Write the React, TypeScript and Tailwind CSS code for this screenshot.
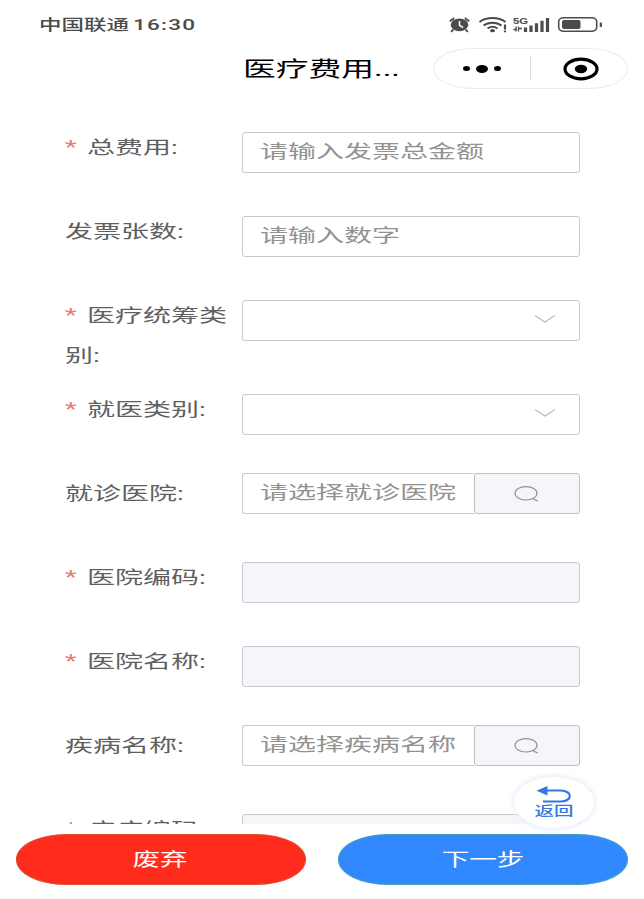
import React from "react";

type Field = {
  label: string[];
  required?: boolean;
  type: "input" | "select" | "search" | "disabled";
  placeholder?: string;
};

const fields: Field[] = [
  { label: ["总费用:"], required: true, type: "input", placeholder: "请输入发票总金额" },
  { label: ["发票张数:"], type: "input", placeholder: "请输入数字" },
  { label: ["医疗统筹类", "别:"], required: true, type: "select" },
  { label: ["就医类别:"], required: true, type: "select" },
  { label: ["就诊医院:"], type: "search", placeholder: "请选择就诊医院" },
  { label: ["医院编码:"], required: true, type: "disabled" },
  { label: ["医院名称:"], required: true, type: "disabled" },
  { label: ["疾病名称:"], type: "search", placeholder: "请选择疾病名称" },
  { label: ["疾病编码:"], required: true, type: "disabled" },
];

const StatusIcons = () => {
  return (
    <svg className="h-5 w-[160px]" viewBox="0 0 160 20" fill="none">
      {/* alarm */}
      <g transform="translate(5 2)">
        <ellipse cx="10.5" cy="7.8" rx="8.8" ry="6.4" fill="#4b4b4b" />
        <path d="M.8 4.2 5.200 1M20.200 4.200 15.800 1M4.500 12.500 2 14.800M16.500 12.500 19 14.800" stroke="#4b4b4b" strokeWidth="1.8" />
        <path d="M10.500 4v4.300l3.600 2.200" stroke="#fff" strokeWidth="1.5" />
      </g>
      {/* wifi */}
      <g stroke="#4b4b4b" strokeWidth="2">
        <path d="M35.500 7c7-5.200 19-5.200 26 0" />
        <path d="M39.500 10.500c5-3.800 13-3.800 18 0" />
        <path d="M43.500 13.500c3-2 7-2 10 0" />
      </g>
      <ellipse cx="48.500" cy="15.700" rx="2.500" ry="1.600" fill="#4b4b4b" />
      <path d="M61 9.500v5M61 15.500v1.800" stroke="#4b4b4b" strokeWidth="2.200" />
      {/* signal */}
      <text x="0" y="0" transform="translate(69 9.2) scale(1.2 1)" fontSize="9.5" fontWeight="700" fill="#4b4b4b" fontFamily="Liberation Sans, sans-serif">5G</text>
      <path d="M69.500 14.500h3.500M72 11.500v5M74.500 11.500v5M74.500 13.500h3.500" stroke="#4b4b4b" strokeWidth="1.300" />
      <path d="M81.500 12.500v4.500M87 10.500v6.500M92.500 8.200V17M98 5.800V17M103.500 3v14" stroke="#4b4b4b" strokeWidth="3.200" />
      {/* battery */}
      <rect x="114.700" y="2.800" width="38" height="13.400" rx="5" ry="3.600" stroke="#4b4b4b" strokeWidth="1.600" />
      <rect x="118" y="5" width="18.500" height="9" rx="2" fill="#4b4b4b" />
      <path d="M156.800 7.500v4.500" stroke="#4b4b4b" strokeWidth="2.200" />
    </svg>
  );
};

const SearchIcon = () => {
  return (
    <svg className="h-4 w-6" viewBox="0 0 24 16" fill="none" stroke="#8f9196" strokeWidth="1.2">
      <ellipse cx="12" cy="7.300" rx="11" ry="6.700" />
      <path d="M18.500 12.200c1.500 1.400 3 2 5.200 2.600" />
    </svg>
  );
};

const ArrowDown = () => {
  return (
    <svg className="mb-[3px] h-2 w-[22px]" viewBox="0 0 22 8" fill="none" stroke="#b9bbbf" strokeWidth="1.2">
      <path d="M1 .6 11 7 21 .6" />
    </svg>
  );
};

const Placeholder = ({ text }: { text?: string }) => {
  return (
    <span className="inline-block origin-left scale-x-[1.556] whitespace-nowrap text-[18px] leading-[38px] text-[#929292]">
      {text}
    </span>
  );
};

const Control = ({ field }: { field: Field }) => {
  if (field.type === "search") {
    return (
      <div className="flex h-[41px] w-[338px]">
        <div className="w-[232px] overflow-hidden rounded-l-[3px] border border-r-0 border-[#c9cacd] pl-[17px]">
          <Placeholder text={field.placeholder} />
        </div>
        <div className="flex flex-1 items-center justify-center rounded-[3px] border border-[#bfc0c4] bg-[#f5f6fa] pr-0.5">
          <SearchIcon />
        </div>
      </div>
    );
  }
  if (field.type === "disabled") {
    return <div className="mt-[5px] h-[41px] w-[338px] rounded-[3px] border border-[#c9cacf] bg-[#f5f6fa]"></div>;
  }
  return (
    <div className="mt-[5px] flex h-[41px] w-[338px] items-center justify-between rounded-[3px] border border-[#c9c9cb] pb-px pl-[17px] pr-[23px]">
      <Placeholder text={field.placeholder} />
      {field.type === "select" && <ArrowDown />}
    </div>
  );
};

const FormItem = ({ field }: { field: Field }) => {
  return (
    <div className={field.label.length > 1 ? "flex h-[94px] shrink-0" : "flex h-[84px] shrink-0"}>
      <div className="w-[177px] shrink-0 pt-px text-[18px] leading-10 text-[#5f5f61]">
        {field.label.map((line, i) => (
          <div key={line} className="flex h-10">
            {field.required && i === 0 && (
              <span className="w-[22px] shrink-0">
                <span className="inline-block origin-left -translate-y-px scale-x-[1.5] text-[#e87a72]">*</span>
              </span>
            )}
            <span className="inline-block origin-left scale-x-[1.556] whitespace-nowrap">{line}</span>
          </div>
        ))}
      </div>
      <Control field={field} />
    </div>
  );
};

const App = () => {
  return (
    <main className="relative flex h-[899px] w-[644px] flex-col overflow-hidden bg-white font-['Roboto','Noto_Sans_CJK_SC',sans-serif]">
      <div className="flex h-12 items-start justify-between pl-[39px] pr-[40px] pt-[15px]">
        <span className="inline-block origin-left scale-x-[1.5] whitespace-nowrap text-[15px] font-medium leading-5 text-[#4b4b4b]">
          中国联通 <span className="-ml-px tracking-[0.8px]">16:30</span>
        </span>
        <StatusIcons />
      </div>
      <header className="flex h-[79px] items-start justify-between pl-[243px] pr-4">
        <h1 className="origin-left scale-x-[1.56] whitespace-nowrap pt-px text-[21px] leading-10 text-black">医疗费用...</h1>
        <div className="flex h-[41px] w-[195px] items-center rounded-[40px/20px] border border-[#ebebeb]">
          <div className="flex w-24 items-center justify-center gap-1.5">
            <div className="h-[5px] w-[7px] rounded-[50%] bg-black"></div>
            <div className="h-2 w-3 rounded-[50%] bg-black"></div>
            <div className="h-[5px] w-[7px] rounded-[50%] bg-black"></div>
          </div>
          <div className="h-6 w-px bg-[#dcdcdc]"></div>
          <div className="flex flex-1 justify-center pl-[3px]">
            <svg className="h-6 w-9" viewBox="0 0 36 24">
              <ellipse cx="18" cy="12" rx="16" ry="9.8" fill="none" stroke="#000" strokeWidth="3.2" />
              <ellipse cx="18" cy="12" rx="6.2" ry="4.2" />
            </svg>
          </div>
        </div>
      </header>
      <section className="flex h-[697px] flex-col overflow-hidden pl-[65px]">
        {fields.map((field) => (
          <FormItem key={field.label[0]} field={field} />
        ))}
      </section>
      <footer className="flex flex-1 justify-between px-4 pt-[10px] text-center text-[18px] leading-[49px] text-white">
        <button className="h-[51px] w-[290px] rounded-[50px/25px] border border-[#dc5030] bg-[#ff2c1d] pr-0.5">
          <span className="inline-block scale-x-[1.53]">废弃</span>
        </button>
        <button className="h-[51px] w-[290px] rounded-[50px/25px] border border-[#43a3b4] bg-[#3289ff] pr-px">
          <span className="inline-block scale-x-[1.53]">下一步</span>
        </button>
      </footer>
      <button className="absolute left-[514px] top-[777px] flex h-[51px] w-20 flex-col items-center rounded-[50%] bg-white pt-[9px] text-[#3478e5] shadow-[0_0_5px_2px_#e6f0fb]">
        <svg className="h-[17px] w-9 shrink-0" viewBox="0 0 36 17" fill="none">
          <path d="M10 4.5H24.500c12.500 0 12.500 11 0 11H7" stroke="#3478e5" strokeWidth="2.2" />
          <path d="M.500 4.700 11.500 0v9.400z" fill="#3478e5" />
        </svg>
        <span className="inline-block scale-x-[1.5] text-[13px] font-medium leading-4">返回</span>
      </button>
    </main>
  );
};

export default App;
